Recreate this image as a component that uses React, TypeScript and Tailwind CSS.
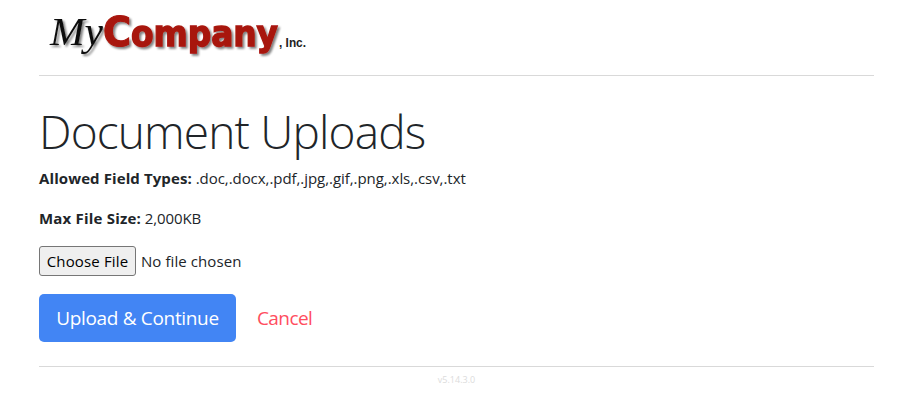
export default function App() {
  return (
    <div className="min-h-[415px] bg-white px-[39px] text-[#212529] font-['Open_Sans','Noto_Sans',sans-serif]">
      <header className="h-[76px] border-b border-[#d9d9d9] pl-[9px] pt-[9px]">
        <svg width="270" height="52" viewBox="0 0 270 52" className="block">
          <defs>
            <filter id="s" x="-10%" y="-10%" width="130%" height="130%">
              <feGaussianBlur in="SourceAlpha" stdDeviation="1.1" />
              <feOffset dx="2" dy="2" />
              <feComponentTransfer><feFuncA type="linear" slope="0.5" /></feComponentTransfer>
              <feMerge><feMergeNode /><feMergeNode in="SourceGraphic" /></feMerge>
            </filter>
          </defs>
          <g filter="url(#s)">
            <text x="2" y="36" fontFamily="'Liberation Serif',serif" fontStyle="italic" fontSize="40" fill="#111" textLength="53" lengthAdjust="spacingAndGlyphs">My</text>
            <text x="55" y="37" fontFamily="'DejaVu Sans',sans-serif" fontWeight="700" fontSize="41" fill="#a8140a" stroke="#a8140a" strokeWidth="1.2" textLength="28" lengthAdjust="spacingAndGlyphs">C</text>
            <text x="83" y="37" fontFamily="'DejaVu Sans',sans-serif" fontWeight="700" fontSize="36" fill="#a8140a" stroke="#a8140a" strokeWidth="1.4" textLength="147" lengthAdjust="spacingAndGlyphs">ompany</text>
          </g>
          <text x="231" y="38" fontFamily="'Liberation Sans',sans-serif" fontWeight="700" fontSize="12" fill="#222" textLength="27" lengthAdjust="spacingAndGlyphs">, Inc.</text>
        </svg>
      </header>
      <h1 className="mt-[21px] text-[46px] leading-[68px] font-light tracking-[-0.85px]">Document Uploads</h1>
      <p className="mt-[1px] text-[15px] leading-[24px] tracking-[-0.05px]"><b className="font-bold tracking-[0.1px]">Allowed Field Types:</b> .doc,.docx,.pdf,.jpg,.gif,.png,.xls,.csv,.txt</p>
      <p className="mt-[16px] text-[15px] leading-[24px] tracking-[-0.1px]"><b className="font-bold tracking-[0.2px]">Max File Size:</b> 2,000KB</p>
      <div className="mt-[16px] flex h-[30px] items-center text-[15px]">
        <button className="h-[30px] w-[97px] rounded-[3px] border border-[#767676] bg-[#efefef] tracking-[0.15px] text-black">Choose File</button>
        <span className="ml-[5px] tracking-[0.08px]">No file chosen</span>
      </div>
      <div className="mt-[18px] flex items-center">
        <button className="h-[48px] w-[197px] rounded-[5px] bg-[#4285f4] text-[19px] tracking-[-0.33px] text-white">Upload &amp; Continue</button>
        <a className="ml-[21px] pt-[1px] text-[19px] tracking-[-0.6px] text-[#ff4d5e]">Cancel</a>
      </div>
      <footer className="mt-[24px] border-t border-[#d9d9d9] pt-[6px] text-center text-[9px] text-[#dcdcdc]">v5.14.3.0</footer>
    </div>
  );
}
